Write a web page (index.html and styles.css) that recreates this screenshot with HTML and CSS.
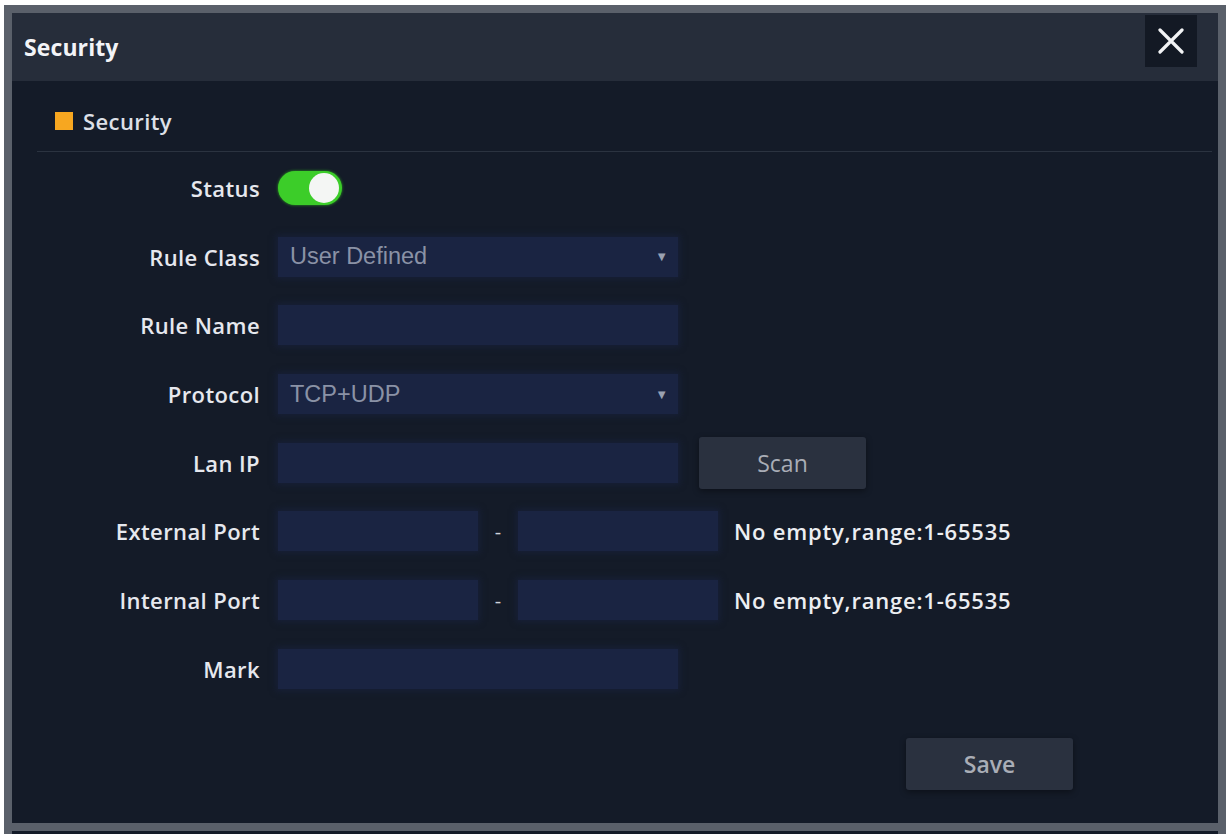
FILE: index.html
```
<!DOCTYPE html>
<html>
<head>
<meta charset="utf-8">
<link rel="stylesheet" href="styles.css">
</head>
<body>
<div class="dialog">
  <div class="dlg-header">
    <div class="dlg-title">Security</div>
    <button class="close-btn" aria-label="Close">
      <svg width="26" height="26" viewBox="0 0 26 26"><path d="M2 2 L24 24 M24 2 L2 24" stroke="#f2f3f5" stroke-width="3.2" stroke-linecap="round"/></svg>
    </button>
  </div>
  <div class="dlg-body">
    <div class="section-title"><span class="sq"></span>Security</div>
    <div class="divider"></div>
    <div class="form">
      <div class="row">
        <div class="label">Status</div>
        <div class="toggle"><span class="knob"></span></div>
      </div>
      <div class="row">
        <div class="label">Rule Class</div>
        <div class="field select"><span>User Defined</span><span class="arrow">▼</span></div>
      </div>
      <div class="row">
        <div class="label">Rule Name</div>
        <div class="field"></div>
      </div>
      <div class="row">
        <div class="label">Protocol</div>
        <div class="field select"><span>TCP+UDP</span><span class="arrow">▼</span></div>
      </div>
      <div class="row">
        <div class="label">Lan IP</div>
        <div class="field"></div>
        <button class="btn scan">Scan</button>
      </div>
      <div class="row">
        <div class="label">External Port</div>
        <div class="field short"></div>
        <span class="dash">-</span>
        <div class="field short"></div>
        <span class="hint">No empty,range:1-65535</span>
      </div>
      <div class="row">
        <div class="label">Internal Port</div>
        <div class="field short"></div>
        <span class="dash">-</span>
        <div class="field short"></div>
        <span class="hint">No empty,range:1-65535</span>
      </div>
      <div class="row">
        <div class="label">Mark</div>
        <div class="field"></div>
      </div>
    </div>
    <div class="footer">
      <button class="btn save">Save</button>
    </div>
  </div>
</div>
</body>
</html>
```
FILE: styles.css
```
html, body {
  margin: 0;
  padding: 0;
  background: #ffffff;
}
body {
  font-family: "Open Sans", "Noto Sans", sans-serif;
  overflow: hidden;
}
.dialog {
  margin: 5px 0 0 4px;
  width: 1222px;
  height: 840px;
  box-sizing: border-box;
  border: 8px solid #5a606a;
  border-bottom: none;
  background: #141b28;
  display: flex;
  flex-direction: column;
}
.dlg-header {
  height: 68px;
  flex: none;
  background: #262d3a;
  display: flex;
  align-items: flex-start;
  justify-content: space-between;
  padding: 0 21px 0 12px;
}
.dlg-title {
  color: #f3f4f7;
  font-weight: 700;
  font-size: 23px;
  line-height: 68px;
  letter-spacing: 0.1px;
}
.close-btn {
  margin-top: 2px;
  width: 52px;
  height: 52px;
  border: none;
  background: #131924;
  display: flex;
  align-items: center;
  justify-content: center;
  padding: 0;
}
.dlg-body {
  padding: 20px 6px 0 25px;
  display: flex;
  flex-direction: column;
  height: 750px;
  border-bottom: 8px solid #5a606a;
  box-sizing: border-box;
  flex: none;
}
.section-title {
  height: 40px;
  display: flex;
  align-items: center;
  padding-left: 18px;
  color: #dde0e7;
  font-size: 22px;
  font-weight: 600;
  letter-spacing: 0.4px;
}
.sq {
  width: 18px;
  height: 18px;
  background: #f7a720;
  margin-right: 10px;
  flex: none;
}
.divider {
  margin-top: 10px;
  height: 1px;
  background: #2b3340;
}
.form {
  margin-top: 16px;
  display: flex;
  flex-direction: column;
  gap: 28.7px;
}
.row {
  height: 40px;
  display: flex;
  align-items: center;
}
.label {
  width: 223px;
  flex: none;
  text-align: right;
  color: #e6e8ee;
  font-size: 22px;
  font-weight: 600;
  letter-spacing: 0.4px;
  margin-right: 18px;
  white-space: nowrap;
}
.field {
  width: 400px;
  height: 40px;
  flex: none;
  background: #1a2442;
  box-shadow: 0 0 6px 2px #172038;
  box-sizing: border-box;
}
.field.short {
  width: 200px;
}
.select {
  display: flex;
  align-items: center;
  justify-content: space-between;
  padding: 0 10px 0 12px;
  font-family: "Liberation Sans", Arial, sans-serif;
  font-size: 23.5px;
  color: #8a92a6;
}
.arrow {
  font-size: 13px;
  color: #9aa1b2;
}
.toggle {
  width: 64px;
  height: 34px;
  border-radius: 17px;
  background: #3ccd29;
  position: relative;
  box-shadow: 0 0 3px #2ea820;
}
.knob {
  position: absolute;
  right: 3px;
  top: 2px;
  width: 30px;
  height: 30px;
  border-radius: 50%;
  background: #f4f6f4;
}
.btn {
  border: none;
  background: #2a313f;
  color: #a9adb6;
  font-family: "Open Sans", "Noto Sans", sans-serif;
  font-size: 23px;
  border-radius: 3px;
  box-shadow: 0 2px 6px rgba(0,0,0,0.4);
  width: 167px;
  height: 52px;
  padding: 0;
}
.scan {
  margin-left: 21px;
}
.dash {
  width: 40px;
  text-align: center;
  color: #d0d3da;
  font-size: 20px;
}
.hint {
  margin-left: 16px;
  color: #eceef2;
  font-size: 22px;
  font-weight: 600;
  letter-spacing: 0.8px;
  white-space: nowrap;
}
.footer {
  margin-top: 49px;
  padding-left: 869px;
}
.save {
  font-weight: 600;
}
```
